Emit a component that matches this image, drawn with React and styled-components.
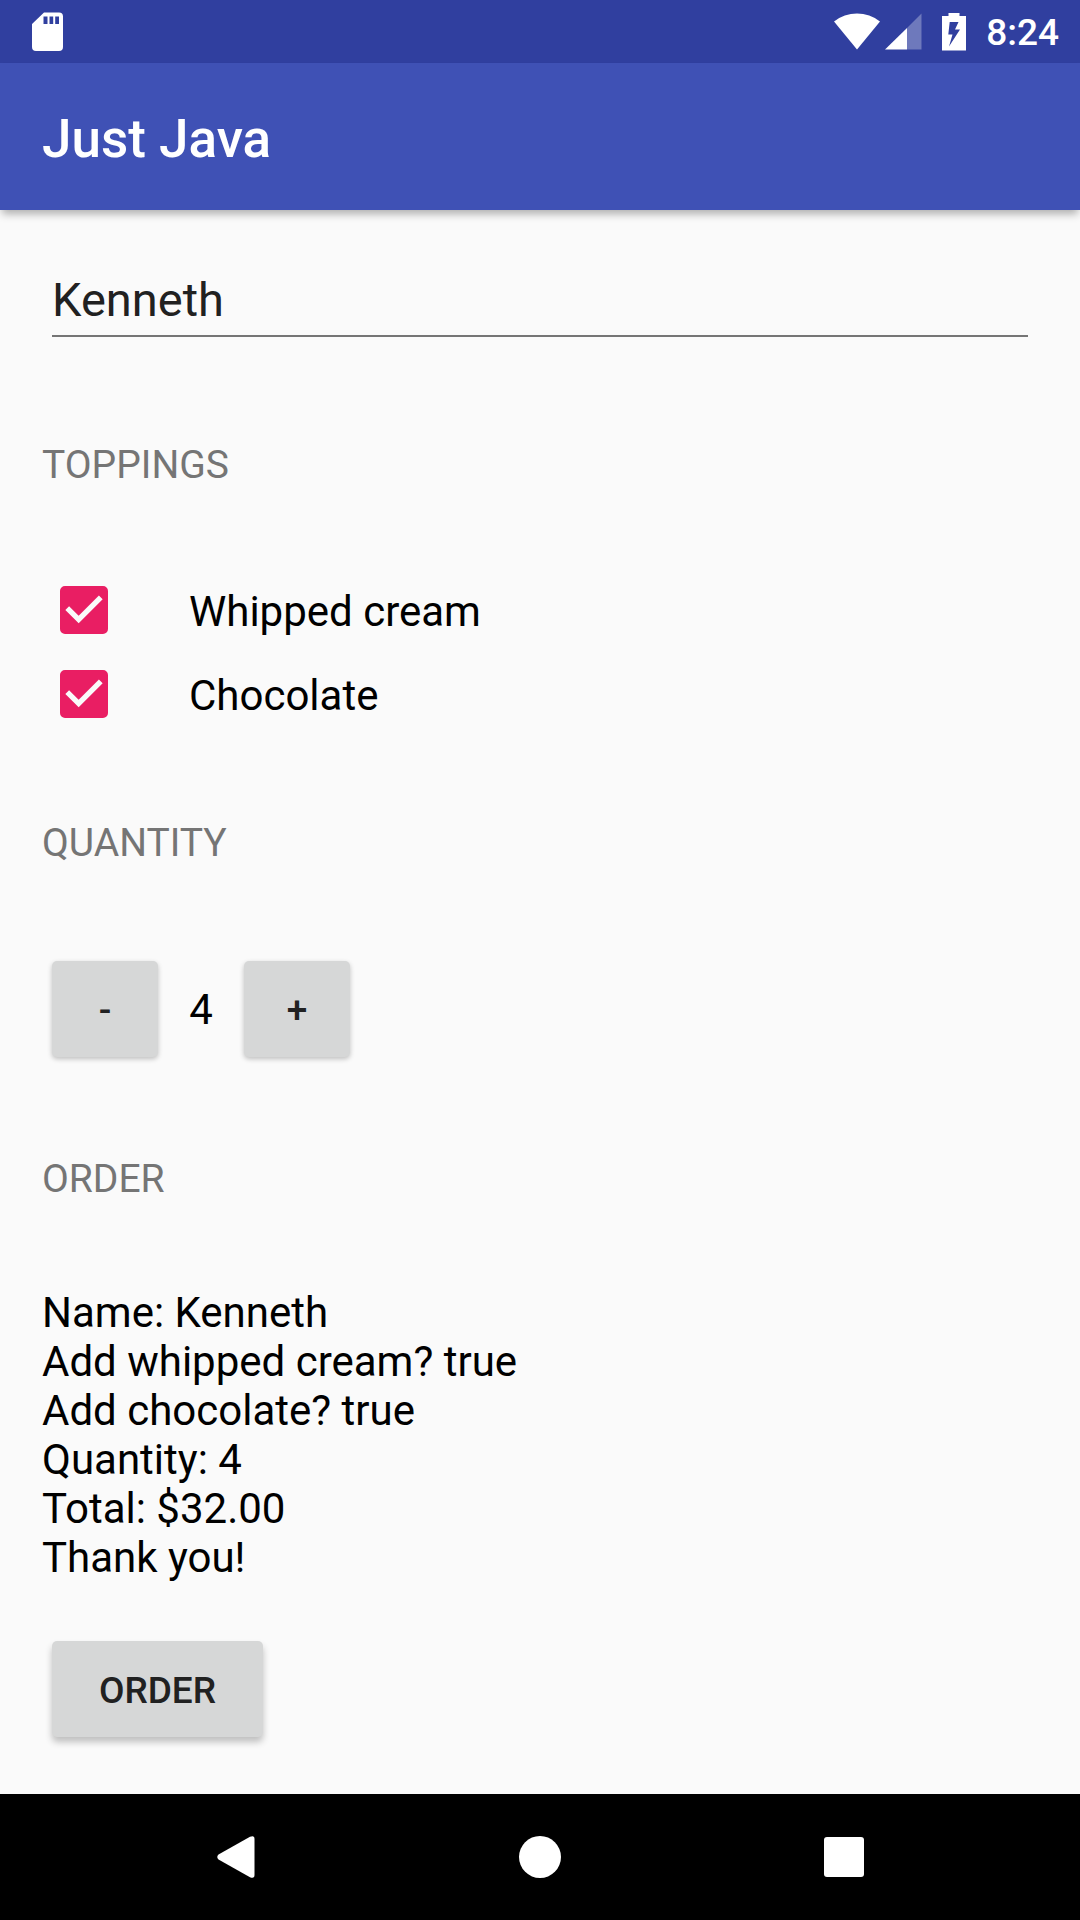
import React, { useState } from "react";
import styled, { createGlobalStyle } from "styled-components";

const GlobalStyle = createGlobalStyle`
  *, *::before, *::after { box-sizing: border-box; }
  body {
    margin: 0;
    background: #fafafa;
    font-family: Roboto, "Noto Sans", sans-serif;
    color: #000;
  }
  button, input { font-family: inherit; }
`;

const Screen = styled.div`
  display: flex;
  flex-direction: column;
  min-height: 100vh;
`;

const StatusBar = styled.div`
  display: flex;
  align-items: center;
  justify-content: space-between;
  height: 63px;
  padding: 0 21px 0 32px;
  background: #303f9f;
  color: #fff;
`;

const StatusIcons = styled.div`
  display: flex;
  align-items: center;
  gap: 20px;
`;

const Radios = styled.div`
  display: flex;
  gap: 5px;
`;

const Clock = styled.time`
  padding-top: 2px;
  font-size: 37px;
  line-height: 43px;
  font-weight: 500;
`;

const AppBar = styled.header`
  display: flex;
  align-items: center;
  height: 147px;
  padding: 4px 42px 0;
  background: #3f51b5;
  color: #fff;
  box-shadow: 0 6px 8px -2px rgba(0, 0, 0, 0.3);
`;

const Title = styled.h1`
  margin: 0;
  font-size: 53px;
  line-height: 62px;
  font-weight: 500;
`;

const Form = styled.form`
  flex: 1;
  padding: 62px 42px 57px;
`;

const Field = styled.div`
  padding: 0 10px 21px;
`;

const NameInput = styled.input`
  display: block;
  width: 100%;
  height: 65px;
  padding: 0 0 8px;
  border: 0;
  border-bottom: 2px solid #757575;
  border-radius: 0;
  outline: 0;
  background: transparent;
  color: #212121;
  font-size: 47px;
  line-height: 55px;
`;

const SectionTitle = styled.h2`
  margin: 82px 0 78px;
  color: #757575;
  font-size: 39px;
  line-height: 50px;
  font-weight: 400;
`;

const OptionRow = styled.label`
  display: flex;
  align-items: center;
  gap: 81px;
  height: 84px;
  padding-left: 18px;
  font-size: 42px;
  line-height: 49px;
`;

const OptionText = styled.span`
  padding-top: 2px;
`;

const TickBox = styled.span`
  display: grid;
  width: 48px;
  height: 48px;

  & > * { grid-area: 1 / 1; }
  & > svg { pointer-events: none; }
`;

const TickInput = styled.input`
  appearance: none;
  width: 48px;
  height: 48px;
  margin: 0;
  border: 5px solid #757575;
  border-radius: 5px;

  &:checked {
    border-color: #e91e63;
    background: #e91e63;
  }
`;

const Stepper = styled.div`
  display: flex;
  align-items: center;
  padding: 15px 10px;
`;

const Quantity = styled.output`
  width: 86px;
  text-align: center;
  font-size: 42px;
  line-height: 49px;
`;

const RaisedButton = styled.button`
  width: ${(p) => (p.$wide ? "211px" : "106px")};
  height: 96px;
  padding: 2px 0 0;
  border: 0;
  border-radius: 5px;
  background: #d6d7d7;
  color: #212121;
  font-size: 37px;
  line-height: 43px;
  font-weight: 500;
  box-shadow: ${(p) =>
    p.$wide ? "0 5px 7px rgba(0, 0, 0, 0.24)" : "0 2px 5px rgba(0, 0, 0, 0.24)"};
`;

const Summary = styled.p`
  margin: 0;
  padding: 6px 0 59px;
  font-size: 42px;
  line-height: 49px;
  white-space: pre-line;
`;

const Submit = styled.div`
  padding: 0 10px;
`;

const NavBar = styled.nav`
  display: flex;
  justify-content: center;
  gap: 94px;
  height: 126px;
  background: #000;
`;

const NavButton = styled.button`
  display: grid;
  place-items: center;
  width: 210px;
  padding: 0;
  border: 0;
  background: transparent;
`;

function SdCardIcon() {
  return (
    <svg width="31" height="39" viewBox="0 0 31 39" aria-hidden="true">
      <path
        fill="#fff"
        fillRule="evenodd"
        d="M12 .5H27a4 4 0 0 1 4 4V35a4 4 0 0 1-4 4H4a4 4 0 0 1-4-4V12ZM11.5 4.5V12h4V4.5ZM17.5 4.5V12h3.7V4.5ZM23.2 4.5V12h3.8V4.5Z"
      />
    </svg>
  );
}

function WifiIcon() {
  return (
    <svg width="46" height="37" viewBox="0 0 46 37" aria-hidden="true">
      <path fill="#fff" d="M0 8.5A37 37 0 0 1 46 8.5L23 36.5Z" />
    </svg>
  );
}

function SignalIcon() {
  return (
    <svg width="37" height="37" viewBox="0 0 37 37" aria-hidden="true">
      <path fill="#fff" fillOpacity="0.3" d="M36.5 .5V36.5H22V15Z" />
      <path fill="#fff" d="M22 15V36.5H0Z" />
    </svg>
  );
}

function BatteryIcon() {
  return (
    <svg width="24" height="38" viewBox="0 0 24 38" aria-hidden="true">
      <path
        fill="#fff"
        fillRule="evenodd"
        d="M6.5 0H17.5V3H24V37.5H0V3H6.5ZM7.7 9L6.3 21.5H10.5L7 33.5L18 16.5H13L16.5 9Z"
      />
    </svg>
  );
}

function Tick() {
  return (
    <svg width="48" height="48" viewBox="3 3 18 18" aria-hidden="true">
      <path fill="#fafafa" d="M10 17l-5-5 1.41-1.41L10 14.17l7.59-7.59L19 8z" />
    </svg>
  );
}

function Option({ checked, onChange, children }) {
  return (
    <OptionRow>
      <TickBox>
        <TickInput
          type="checkbox"
          checked={checked}
          onChange={(e) => onChange(e.target.checked)}
        />
        {checked && <Tick />}
      </TickBox>
      <OptionText>{children}</OptionText>
    </OptionRow>
  );
}

function summarize({ name, cream, chocolate, quantity }) {
  const price = quantity * (5 + (cream ? 1 : 0) + (chocolate ? 2 : 0));
  return [
    `Name: ${name}`,
    `Add whipped cream? ${cream}`,
    `Add chocolate? ${chocolate}`,
    `Quantity: ${quantity}`,
    `Total: $${price.toFixed(2)}`,
    "Thank you!",
  ].join("\n");
}

export default function App() {
  const [name, setName] = useState("Kenneth");
  const [cream, setCream] = useState(true);
  const [chocolate, setChocolate] = useState(true);
  const [quantity, setQuantity] = useState(4);
  const order = { name, cream, chocolate, quantity };
  const [summary, setSummary] = useState(summarize(order));

  const submit = (e) => {
    e.preventDefault();
    setSummary(summarize(order));
  };

  return (
    <Screen>
      <GlobalStyle />
      <StatusBar>
        <SdCardIcon />
        <StatusIcons>
          <Radios>
            <WifiIcon />
            <SignalIcon />
          </Radios>
          <BatteryIcon />
          <Clock>8:24</Clock>
        </StatusIcons>
      </StatusBar>
      <AppBar>
        <Title>Just Java</Title>
      </AppBar>
      <Form onSubmit={submit}>
        <Field>
          <NameInput
            type="text"
            aria-label="Name"
            spellCheck={false}
            value={name}
            onChange={(e) => setName(e.target.value)}
          />
        </Field>
        <SectionTitle>TOPPINGS</SectionTitle>
        <Option checked={cream} onChange={setCream}>Whipped cream</Option>
        <Option checked={chocolate} onChange={setChocolate}>Chocolate</Option>
        <SectionTitle>QUANTITY</SectionTitle>
        <Stepper>
          <RaisedButton
            type="button"
            onClick={() => setQuantity(Math.max(1, quantity - 1))}
          >
            -
          </RaisedButton>
          <Quantity>{quantity}</Quantity>
          <RaisedButton type="button" onClick={() => setQuantity(quantity + 1)}>
            +
          </RaisedButton>
        </Stepper>
        <SectionTitle>ORDER</SectionTitle>
        <Summary>{summary}</Summary>
        <Submit>
          <RaisedButton type="submit" $wide>ORDER</RaisedButton>
        </Submit>
      </Form>
      <NavBar>
        <NavButton type="button" aria-label="Back">
          <svg width="42" height="42" viewBox="0 0 42 42" aria-hidden="true">
            <path
              fill="#fff"
              d="M3.5 18.5L35 .8Q39.5 -1 39.5 3V39Q39.5 43 35 41.2L3.5 23.5Q1 21 3.5 18.5Z"
            />
          </svg>
        </NavButton>
        <NavButton type="button" aria-label="Home">
          <svg width="42" height="42" viewBox="0 0 42 42" aria-hidden="true">
            <circle cx="21" cy="21" r="21" fill="#fff" />
          </svg>
        </NavButton>
        <NavButton type="button" aria-label="Overview">
          <svg width="40" height="40" viewBox="0 0 40 40" aria-hidden="true">
            <rect width="40" height="40" rx="3" fill="#fff" />
          </svg>
        </NavButton>
      </NavBar>
    </Screen>
  );
}
